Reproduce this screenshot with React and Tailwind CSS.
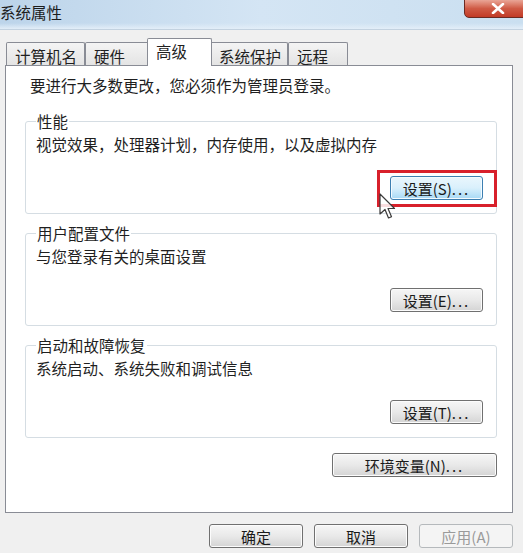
import React from "react";

const FONT = { fontFamily: '"Noto Sans CJK SC", "Noto Sans", sans-serif' };

function WinButton({ children, width = "w-[93px]", hot = false, disabled = false }) {
  const base = "h-[24px] rounded-[3px] border text-[15px] leading-none flex items-center justify-center";
  const look = disabled
    ? "border-[#b5b9bc] bg-[#f4f4f4] text-[#9a9a9a]"
    : hot
    ? "border-[#3c7fb1] bg-gradient-to-b from-[#eaf6fd] via-[#d9f0fc] to-[#a7d9f5] text-[#1a1a1a] shadow-[inset_0_0_0_1px_#f4fbff]"
    : "border-[#707070] bg-gradient-to-b from-[#f6f6f6] via-[#e9e9e9] to-[#d4d4d4] text-[#1a1a1a] shadow-[inset_0_0_0_1px_#fcfcfc]";
  return <div className={`${base} ${look} ${width}`}>{children}</div>;
}

function Group({ title, desc, btn, highlight }) {
  return (
    <fieldset className="h-[103px] border border-[#d5dde3] rounded-[3px] pl-[10px] pr-[13px]">
      <legend className="px-[1px] text-[15.5px] leading-[20px] text-[#1f1f1f]">{title}</legend>
      <div className="mt-[3px] text-[15.5px] leading-[20px] text-[#1f1f1f] whitespace-nowrap">{desc}</div>
      <div className="mt-[22px] flex justify-end">
        <div className="relative">
          <WinButton hot={highlight}>{btn}</WinButton>
          {highlight && (
            <>
              <div className="absolute -left-[13px] -right-[14px] -top-[6px] -bottom-[7px] border-[3px] border-[#d8202b]" />
              <svg className="absolute left-[-11px] top-[17px]" width="18" height="27" viewBox="0 0 18 27">
                <path
                  d="M1 1 L1 21 L6 16.5 L9.5 25 L12.5 23.7 L9 15.5 L15.5 15.5 Z"
                  fill="#ffffff"
                  fillOpacity="0.85"
                  stroke="#3a3a3a"
                  strokeWidth="1.2"
                  strokeLinejoin="round"
                />
              </svg>
            </>
          )}
        </div>
      </div>
    </fieldset>
  );
}

function Tab({ label, width, active }) {
  if (active) {
    return (
      <div
        className={`relative z-10 -mx-[2px] -mb-px h-[28px] ${width} bg-white border border-b-0 border-[#898c95] rounded-t-[2px] pl-[8px] pt-[1px] text-[15.5px] leading-[22px] text-[#1f1f1f]`}
      >
        {label}
      </div>
    );
  }
  return (
    <div
      className={`h-[23px] ${width} bg-gradient-to-b from-[#f4f4f4] to-[#e4e4e4] border border-b-0 border-[#898c95] rounded-t-[2px] pl-[8px] pt-[2px] text-[15.5px] leading-[22px] text-[#1f1f1f]`}
    >
      {label}
    </div>
  );
}

export default function App() {
  return (
    <div style={FONT} className="w-[523px] h-[553px] bg-[#f0f0f0] overflow-hidden flex flex-col">
      {/* title bar */}
      <div className="relative h-[30px] shrink-0 bg-gradient-to-r from-[#bcd4ea] via-[#d4e5f4] to-[#cadff0] border-b border-[#c3d2e0]">
        <div className="absolute inset-x-0 bottom-0 h-[6px] bg-gradient-to-b from-transparent to-[#e3eef8]" />
        <div className="absolute left-0 top-[2px] text-[15.5px] leading-[20px] text-[#1c1c1c]">系统属性</div>
        <div className="absolute right-[-8px] top-[-1px] w-[67px] h-[19px] rounded-b-[5px] border border-[#6b2a22] bg-gradient-to-b from-[#e9a596] via-[#cf5a45] to-[#c23a26] flex items-center justify-center">
          <svg width="14" height="11" viewBox="0 0 14 11">
            <path d="M2 1 L12 10 M12 1 L2 10" stroke="#ffffff" strokeWidth="2.6" strokeLinecap="round" />
          </svg>
        </div>
      </div>

      {/* tabs */}
      <div className="mt-[8px] ml-[6px] flex items-end h-[27px]">
        <Tab label="计算机名" width="w-[79px]" />
        <Tab label="硬件" width="w-[64px]" />
        <Tab label="高级" width="w-[65px]" active />
        <Tab label="系统保护" width="w-[78px]" />
        <Tab label="远程" width="w-[60px]" />
      </div>

      {/* panel */}
      <div className="ml-[5px] mr-[10px] h-[448px] bg-white border border-[#898c95] pl-[19px] pr-[15px] pt-[9px]">
        <div className="pl-[5px] text-[15.5px] leading-[20px] text-[#1f1f1f] whitespace-nowrap">
          要进行大多数更改，您必须作为管理员登录。
        </div>
        <div className="mt-[16px] flex flex-col gap-[9px]">
          <Group
            title="性能"
            desc="视觉效果，处理器计划，内存使用，以及虚拟内存"
            btn={<span>设置(S)<span className="tracking-[2px]">...</span></span>}
            highlight
          />
          <Group
            title="用户配置文件"
            desc="与您登录有关的桌面设置"
            btn={<span>设置(E)<span className="tracking-[2px]">...</span></span>}
          />
          <Group
            title="启动和故障恢复"
            desc="系统启动、系统失败和调试信息"
            btn={<span>设置(T)<span className="tracking-[2px]">...</span></span>}
          />
        </div>
        <div className="mt-[15px] flex justify-end">
          <WinButton width="w-[165px]">
            <span>环境变量(N)<span className="tracking-[2px]">...</span></span>
          </WinButton>
        </div>
      </div>

      {/* bottom buttons */}
      <div className="mt-[11px] mr-[10px] flex justify-end gap-[11px]">
        <WinButton width="w-[94px]">确定</WinButton>
        <WinButton width="w-[94px]">取消</WinButton>
        <WinButton width="w-[94px]" disabled>应用(A)</WinButton>
      </div>
    </div>
  );
}
